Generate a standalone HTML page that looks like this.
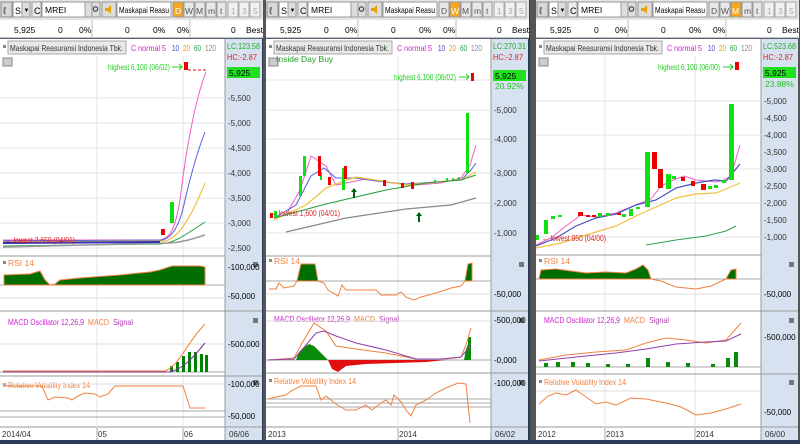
<!DOCTYPE html>
<html><head><meta charset="utf-8"><style>
html,body{margin:0;padding:0;background:#2a3a5a;}
svg{display:block;font-family:"Liberation Sans",sans-serif;}
</style></head><body>
<svg width="800" height="444" viewBox="0 0 800 444" xmlns="http://www.w3.org/2000/svg">
<defs>
<g id="toolbar">
  <rect x="0" y="0" width="263" height="20" fill="#e4e4e4"/>
  <rect x="1" y="2" width="11" height="15" fill="#d8d8d8" stroke="#888"/>
  <text x="3" y="14" font-size="10" fill="#335">&#8467;</text>
  <rect x="13" y="2" width="9" height="15" fill="#fff" stroke="#999"/><text x="15" y="14" font-size="9">S</text>
  <rect x="22" y="2" width="8" height="15" fill="#ddd" stroke="#999"/><text x="23.5" y="12" font-size="6">▼</text>
  <rect x="32" y="2" width="9" height="15" fill="#eee" stroke="#999"/><text x="34" y="14" font-size="9">C</text>
  <rect x="42" y="2" width="43" height="15" fill="#fff" stroke="#999"/><text x="45" y="13" font-size="8.5">MREI</text>
  <rect x="85" y="2" width="7" height="15" fill="#ddd" stroke="#999"/>
  <rect x="92" y="2" width="8" height="15" fill="#ddd" stroke="#999"/><circle cx="95.5" cy="9" r="2.2" fill="none" stroke="#246" stroke-width="1.1"/>
  <rect x="102" y="2" width="14" height="15" fill="#ddd" stroke="#999"/><path d="M105 8h3l3-3v9l-3-3h-3z" fill="#e8a000"/>
  <rect x="117" y="2" width="54" height="15" fill="#fff" stroke="#999"/><text x="119" y="13" font-size="8.5" textLength="50" lengthAdjust="spacingAndGlyphs">Maskapai Reasu</text>
  <rect x="173" y="2" width="10" height="15" fill="#e8e8e8" stroke="#999"/><text x="175" y="14" font-size="8.5" fill="#555">D</text>
  <rect x="184" y="2" width="10" height="15" fill="#e8e8e8" stroke="#999"/><text x="185" y="14" font-size="8.5" fill="#555">W</text>
  <rect x="195" y="2" width="10" height="15" fill="#e8e8e8" stroke="#999"/><text x="196" y="14" font-size="8.5" fill="#555">M</text>
  <rect x="206" y="2" width="10" height="15" fill="#e8e8e8" stroke="#999"/><text x="208" y="14" font-size="8.5" fill="#555">m</text>
  <rect x="217" y="2" width="9" height="15" fill="#e8e8e8" stroke="#999"/><text x="220" y="14" font-size="8.5" fill="#555">t</text>
  <rect x="228" y="2" width="10" height="15" fill="#f0f0f0" stroke="#aaa"/><text x="231" y="14" font-size="8.5" fill="#aaa">1</text>
  <rect x="239" y="2" width="10" height="15" fill="#f0f0f0" stroke="#aaa"/><text x="242" y="14" font-size="8.5" fill="#aaa">3</text>
  <rect x="250" y="2" width="10" height="15" fill="#f0f0f0" stroke="#aaa"/><text x="253" y="14" font-size="8.5" fill="#aaa">5</text>
  <rect x="0" y="20" width="263" height="18" fill="#fff"/>
  <line x1="0" y1="38" x2="263" y2="38" stroke="#888"/>
  <line x1="92" y1="20" x2="92" y2="38" stroke="#bbb"/><line x1="190" y1="20" x2="190" y2="38" stroke="#bbb"/>
  <g font-size="8.5"><text x="14" y="33">5,925</text><text x="58" y="33">0</text><text x="79" y="33">0%</text>
  <text x="125" y="33">0</text><text x="153" y="33">0%</text><text x="177" y="33">0%</text>
  <text x="231" y="33">0</text><text x="246" y="33">Best</text></g>
</g>
<g id="frame">
  <rect x="0" y="39" width="225" height="389" fill="#fff"/>
  <rect x="225" y="39" width="37" height="401" fill="#d6e2ef"/>
  <rect x="0" y="428" width="225" height="12" fill="#fff"/>
  <line x1="225" y1="39" x2="225" y2="440" stroke="#999"/>
  <line x1="0" y1="427" x2="262" y2="427" stroke="#999"/>
  <rect x="3" y="45" width="3" height="3" fill="#888"/>
  <rect x="8" y="41" width="118" height="13" fill="#e8e8e8" stroke="#aaa"/>
  <text x="10" y="51" font-size="8.5" fill="#333" textLength="113" lengthAdjust="spacingAndGlyphs">Maskapai Reasuransi Indonesia Tbk.</text>
  <text x="131" y="51" font-size="8.5" fill="#d020d0" textLength="35" lengthAdjust="spacingAndGlyphs">C normal 5</text>
  <text x="172" y="51" font-size="8.5" fill="#4040d0" textLength="7" lengthAdjust="spacingAndGlyphs">10</text>
  <text x="183" y="51" font-size="8.5" fill="#e0a000" textLength="7" lengthAdjust="spacingAndGlyphs">20</text>
  <text x="194" y="51" font-size="8.5" fill="#20a040" textLength="7" lengthAdjust="spacingAndGlyphs">60</text>
  <text x="205" y="51" font-size="8.5" fill="#888" textLength="11" lengthAdjust="spacingAndGlyphs">120</text>
  <rect x="3" y="58" width="9" height="8" fill="#ccc" stroke="#888"/>
  <rect x="227" y="67" width="33" height="11" fill="#20e020"/>
  <text x="229" y="76" font-size="8.5">5,925</text>
  <rect x="253" y="262" width="5" height="5" fill="#777"/>
  <rect x="253" y="318" width="5" height="5" fill="#777"/>
  <rect x="253" y="380" width="5" height="5" fill="#777"/>
</g>
</defs>

<rect x="0" y="0" width="800" height="444" fill="#2a3a5a"/>
<rect x="263" y="0" width="3" height="440" fill="#555"/>
<rect x="530" y="0" width="6" height="440" fill="#555"/>
<rect x="797" y="0" width="3" height="440" fill="#555"/>

<!-- PANEL 1 -->
<g transform="translate(0,0)">
<use href="#toolbar"/><use href="#frame"/>
<rect x="173" y="2" width="10" height="15" fill="#f5a623" stroke="#999"/><text x="175" y="14" font-size="8.5" fill="#fff">D</text>
<rect x="227" y="40" width="33" height="24" fill="#d6e2ef"/>
<text x="227" y="49" font-size="8.5" fill="#20b020" textLength="33" lengthAdjust="spacingAndGlyphs">LC:123.58</text>
<text x="227" y="60" font-size="8.5" fill="#e02020" textLength="30" lengthAdjust="spacingAndGlyphs">HC:-2.87</text>
<g stroke="#e4e4e4"><line x1="0" y1="98" x2="225" y2="98"/><line x1="0" y1="123" x2="225" y2="123"/><line x1="0" y1="148" x2="225" y2="148"/><line x1="0" y1="173" x2="225" y2="173"/><line x1="0" y1="198" x2="225" y2="198"/><line x1="0" y1="223" x2="225" y2="223"/><line x1="0" y1="248" x2="225" y2="248"/>
<line x1="97" y1="56" x2="97" y2="427"/><line x1="183" y1="56" x2="183" y2="427"/></g>
<g font-size="8" fill="#333"><text x="228" y="101">-5,500</text><text x="228" y="126">-5,000</text><text x="228" y="151">-4,500</text><text x="228" y="176">-4,000</text><text x="228" y="201">-3,500</text><text x="228" y="226">-3,000</text><text x="228" y="251">-2,500</text></g>
<text x="108" y="70" font-size="8.5" fill="#20d020" textLength="62" lengthAdjust="spacingAndGlyphs">highest 6,100 (06/02)</text>
<path d="M172 67h10M179 64l3 3-3 3" stroke="#20d020" fill="none"/>
<rect x="184" y="62" width="4" height="8" fill="#e00"/>
<path d="M188 70h18" stroke="#e00" stroke-dasharray="3,2"/>
<path d="M3 240L160 240C170 238 175 230 180 200C186 150 195 100 206 72" stroke="#f060c0" fill="none"/>
<path d="M3 241L162 240C172 238 180 225 185 200C192 170 198 150 205 132" stroke="#5060e0" fill="none"/>
<path d="M3 242L165 241C178 238 190 220 205 183" stroke="#f0c040" fill="none" stroke-width="1.2"/>
<path d="M3 246L160 244C175 243 185 235 205 222" stroke="#20a040" fill="none"/>
<path d="M3 247L170 243C185 242 195 238 205 235" stroke="#999" fill="none" stroke-width="1.5"/>
<path d="M3 243L160 242" stroke="#3030c0" stroke-width="2"/>
<rect x="161" y="229" width="4" height="6" fill="#e00"/>
<rect x="170" y="202" width="4" height="21" fill="#10e010"/>
<text x="5" y="243" font-size="8.5" fill="#e02020" textLength="70" lengthAdjust="spacingAndGlyphs">← lowest 2,650 (04/01)</text>
<line x1="0" y1="256" x2="225" y2="256" stroke="#999"/>
<text x="8" y="266" font-size="8.5" fill="#f08040">RSI 14</text><rect x="3" y="261" width="3" height="3" fill="#888"/>
<line x1="0" y1="285" x2="225" y2="285" stroke="#aaa"/><line x1="0" y1="298" x2="225" y2="298" stroke="#ddd"/>
<path d="M4 285V275L30 274L40 271L45 280L50 285L55 284L60 280L80 278L120 275L150 272L160 270L172 266L200 266L205 267V285Z" fill="#006e00" stroke="#f08040"/>
<g font-size="8"><text x="228" y="270">-100,000</text><text x="228" y="299">-50,000</text></g>
<line x1="0" y1="311" x2="262" y2="311" stroke="#999"/>
<text x="8" y="325" font-size="8.5" fill="#d020d0" textLength="76" lengthAdjust="spacingAndGlyphs">MACD Oscillator 12,26,9</text><text x="88" y="325" font-size="8.5" fill="#f08040" textLength="21" lengthAdjust="spacingAndGlyphs">MACD</text><text x="113" y="325" font-size="8.5" fill="#b040b0" textLength="20" lengthAdjust="spacingAndGlyphs">Signal</text>
<line x1="0" y1="344" x2="225" y2="344" stroke="#ddd"/>
<line x1="0" y1="372" x2="225" y2="372" stroke="#aaa"/>
<g fill="#008000"><rect x="170" y="366" width="3" height="6"/><rect x="176" y="362" width="3" height="10"/><rect x="182" y="356" width="3" height="16"/><rect x="188" y="352" width="3" height="20"/><rect x="194" y="352" width="3" height="20"/><rect x="200" y="354" width="3" height="18"/><rect x="205" y="355" width="3" height="17"/></g>
<path d="M3 371L165 371C180 365 185 345 205 324" stroke="#f08040" fill="none"/>
<path d="M3 372L170 372C185 368 195 355 205 343" stroke="#8030a0" fill="none"/>
<text x="228" y="347" font-size="8">-500,000</text>
<line x1="0" y1="376" x2="262" y2="376" stroke="#999"/>
<text x="8" y="388" font-size="8.5" fill="#f08040" textLength="82" lengthAdjust="spacingAndGlyphs">Relative Volatility Index 14</text><rect x="3" y="383" width="3" height="3" fill="#888"/>
<line x1="0" y1="384" x2="225" y2="384" stroke="#ddd"/><line x1="0" y1="411" x2="225" y2="411" stroke="#aaa"/><line x1="0" y1="417" x2="225" y2="417" stroke="#aaa"/>
<path d="M3 386L42 386L48 400L55 397L68 398L72 400L78 396L85 393L95 394L100 397L108 394L115 386L183 386L190 408L205 408" stroke="#f08040" fill="none"/>
<g font-size="8"><text x="228" y="387">-100,000</text><text x="228" y="419">-50,000</text></g>
<g font-size="8" fill="#333"><text x="2" y="437">2014/04</text><text x="98" y="437">05</text><text x="184" y="437">06</text><text x="229" y="437">06/06</text></g>
<line x1="97" y1="428" x2="97" y2="440" stroke="#aaa"/><line x1="183" y1="428" x2="183" y2="440" stroke="#aaa"/>
</g>

<!-- PANEL 2 -->
<g transform="translate(266,0)">
<use href="#toolbar"/><use href="#frame"/>
<rect x="184" y="2" width="10" height="15" fill="#f5a623" stroke="#999"/><text x="185" y="14" font-size="8.5" fill="#fff">W</text>
<rect x="227" y="40" width="33" height="24" fill="#d6e2ef"/>
<text x="227" y="49" font-size="8.5" fill="#20b020" textLength="33" lengthAdjust="spacingAndGlyphs">LC:270.31</text>
<text x="227" y="60" font-size="8.5" fill="#e02020" textLength="30" lengthAdjust="spacingAndGlyphs">HC:-2.87</text>
<rect x="227" y="70" width="33" height="11" fill="#20e020"/><rect x="227" y="67" width="33" height="3" fill="#d6e2ef"/>
<text x="229" y="79" font-size="8.5">5,925</text>
<text x="229" y="89" font-size="8.5" fill="#20c020">20.92%</text>
<text x="10" y="62" font-size="8.5" fill="#20a020">Inside Day Buy</text>
<g stroke="#e4e4e4"><line x1="0" y1="80" x2="225" y2="80"/><line x1="0" y1="110" x2="225" y2="110"/><line x1="0" y1="139" x2="225" y2="139"/><line x1="0" y1="173" x2="225" y2="173"/><line x1="0" y1="203" x2="225" y2="203"/><line x1="0" y1="233" x2="225" y2="233"/>
<line x1="132" y1="56" x2="132" y2="427"/></g>
<g font-size="8" fill="#333"><text x="228" y="113">-5,000</text><text x="228" y="142">-4,000</text><text x="228" y="176">-3,000</text><text x="228" y="206">-2,000</text><text x="228" y="236">-1,000</text></g>
<text x="128" y="80" font-size="8.5" fill="#20d020" textLength="62" lengthAdjust="spacingAndGlyphs">highest 6,100 (06/02)</text>
<path d="M193 77h10M200 74l3 3-3 3" stroke="#20d020" fill="none"/>
<rect x="205" y="73" width="3" height="8" fill="#e00"/>
<path d="M8 218L20 215L34 190L45 156L60 166L70 185L80 183L100 179L125 183L150 185L175 183L195 178L204 165L210 145" stroke="#f060c0" fill="none"/>
<path d="M8 218L30 205L45 176L58 168L70 178L90 178L110 181L140 184L170 182L195 180L205 170L210 163" stroke="#5060e0" fill="none"/>
<path d="M8 220L40 205L60 188L75 182L90 177L110 180L140 185L170 182L195 180L210 172" stroke="#f0c040" fill="none" stroke-width="1.2"/>
<path d="M8 218L60 204L120 190L160 183L195 180L210 175" stroke="#20a040" fill="none"/>
<path d="M20 232L80 218L140 209L185 205L210 198" stroke="#888" fill="none" stroke-width="1.2"/>
<g fill="#10e010"><rect x="33" y="176" width="3" height="20"/><rect x="37" y="156" width="3" height="20"/><rect x="54" y="172" width="2" height="8"/><rect x="76" y="168" width="3" height="22"/><rect x="200" y="113" width="3" height="60"/><rect x="8" y="211" width="3" height="6"/></g>
<g fill="#e00"><rect x="52" y="156" width="3" height="20"/><rect x="62" y="177" width="3" height="8"/><rect x="78" y="166" width="3" height="13"/><rect x="117" y="180" width="3" height="6"/><rect x="145" y="182" width="3" height="7"/><rect x="135" y="183" width="3" height="5"/><rect x="4" y="213" width="3" height="5"/></g>
<g fill="#10c010" opacity=".8"><rect x="180" y="178" width="2" height="3"/><rect x="186" y="178" width="2" height="3"/><rect x="192" y="177" width="2" height="3"/><rect x="168" y="180" width="2" height="3"/></g>
<path d="M87 198v-6h-2l3-4 3 4h-2v6z" fill="#006000"/><path d="M152 222v-6h-2l3-4 3 4h-2v6z" fill="#006000"/>
<text x="4" y="216" font-size="8.5" fill="#e02020" textLength="70" lengthAdjust="spacingAndGlyphs">← lowest 1,600 (04/01)</text>
<line x1="0" y1="256" x2="225" y2="256" stroke="#999"/>
<text x="8" y="264" font-size="8.5" fill="#f08040">RSI 14</text><rect x="3" y="259" width="3" height="3" fill="#888"/>
<line x1="0" y1="281" x2="225" y2="281" stroke="#aaa"/><line x1="0" y1="294" x2="225" y2="294" stroke="#ddd"/>
<path d="M31 281L35 264L49 264L52 281Z" fill="#006e00" stroke="#f08040"/>
<path d="M199 281L202 264L206 263L206 281Z" fill="#006e00" stroke="#f08040"/>
<path d="M3 289L10 289L13 283L18 288L28 286L31 281M52 281L58 283L62 290L72 296L76 285L80 290L110 290L115 295L130 295L135 292L140 297L148 300L155 297L170 293L185 288L195 286L199 281" stroke="#f08040" fill="none"/>
<text x="228" y="297" font-size="8">-50,000</text>
<line x1="0" y1="311" x2="262" y2="311" stroke="#999"/>
<text x="8" y="322" font-size="8.5" fill="#d020d0" textLength="76" lengthAdjust="spacingAndGlyphs">MACD Oscillator 12,26,9</text><text x="88" y="322" font-size="8.5" fill="#f08040" textLength="21" lengthAdjust="spacingAndGlyphs">MACD</text><text x="113" y="322" font-size="8.5" fill="#b040b0" textLength="20" lengthAdjust="spacingAndGlyphs">Signal</text>
<line x1="0" y1="360" x2="225" y2="360" stroke="#aaa"/><line x1="0" y1="321" x2="225" y2="321" stroke="#ddd"/>
<path d="M30 360L33 352L38 347L43 344L48 346L52 350L58 356L62 360Z" fill="#0a8a0a"/>
<path d="M62 360L66 369L72 372L80 366L100 364L130 363L160 362L180 360Z" fill="#e01010"/>
<path d="M198 360L200 349L203 342L205 360Z" fill="#0a8a0a"/><rect x="202" y="337" width="3" height="23" fill="#0a8a0a"/>
<path d="M2 360L28 358L35 345L48 323L60 331L70 346L90 349L120 353L150 359L180 359L195 357L200 345L205 328" stroke="#f08040" fill="none"/>
<path d="M2 360L28 359L40 345L50 333L58 331L70 336L90 343L120 350L150 359L175 359L195 357L205 345" stroke="#9040b0" fill="none"/>
<g font-size="8"><text x="228" y="323">-500,000</text><text x="228" y="363">-0,000</text></g>
<line x1="0" y1="373" x2="262" y2="373" stroke="#999"/>
<text x="8" y="384" font-size="8.5" fill="#f08040" textLength="82" lengthAdjust="spacingAndGlyphs">Relative Volatility Index 14</text><rect x="3" y="379" width="3" height="3" fill="#888"/>
<line x1="0" y1="399" x2="225" y2="399" stroke="#aaa"/><line x1="0" y1="403" x2="225" y2="403" stroke="#aaa"/><line x1="0" y1="407" x2="225" y2="407" stroke="#aaa"/>
<path d="M2 399L10 397L20 395L25 391L35 386L50 386L55 400L60 396L70 404L80 410L90 410L100 405L106 410L115 403L120 400L125 405L128 395L135 402L140 410L145 416L150 405L160 400L170 393L180 388L192 383L200 384L204 423" stroke="#f08040" fill="none"/>
<text x="228" y="386" font-size="8">-100,000</text>
<g font-size="8" fill="#333"><text x="2" y="437">2013</text><text x="133" y="437">2014</text><text x="229" y="437">06/02</text></g>
<line x1="132" y1="428" x2="132" y2="440" stroke="#aaa"/>
</g>

<!-- PANEL 3 -->
<g transform="translate(536,0)">
<use href="#toolbar"/><use href="#frame"/>
<rect x="195" y="2" width="10" height="15" fill="#f5a623" stroke="#999"/><text x="196" y="14" font-size="8.5" fill="#fff">M</text>
<rect x="227" y="40" width="33" height="24" fill="#d6e2ef"/>
<text x="227" y="49" font-size="8.5" fill="#20b020" textLength="33" lengthAdjust="spacingAndGlyphs">LC:523.68</text>
<text x="227" y="60" font-size="8.5" fill="#e02020" textLength="30" lengthAdjust="spacingAndGlyphs">HC:-2.87</text>
<text x="229" y="87" font-size="8.5" fill="#20c020">23.88%</text>
<g stroke="#e4e4e4"><line x1="0" y1="101" x2="225" y2="101"/><line x1="0" y1="135" x2="225" y2="135"/><line x1="0" y1="169" x2="225" y2="169"/><line x1="0" y1="203" x2="225" y2="203"/><line x1="0" y1="237" x2="225" y2="237"/>
<line x1="69" y1="56" x2="69" y2="427"/><line x1="159" y1="56" x2="159" y2="427"/></g>
<g font-size="8" fill="#333"><text x="228" y="104">-5,000</text><text x="228" y="121">-4,500</text><text x="228" y="138">-4,000</text><text x="228" y="155">-3,500</text><text x="228" y="172">-3,000</text><text x="228" y="189">-2,500</text><text x="228" y="206">-2,000</text><text x="228" y="223">-1,500</text><text x="228" y="240">-1,000</text></g>
<text x="122" y="70" font-size="8.5" fill="#20d020" textLength="62" lengthAdjust="spacingAndGlyphs">highest 6,100 (06/00)</text>
<path d="M187 67h10M194 64l3 3-3 3" stroke="#20d020" fill="none"/>
<rect x="199" y="62" width="4" height="8" fill="#e00"/>
<path d="M0 245L15 238L30 226L45 215L60 217L80 213L100 205L115 199L125 186L135 181L148 176L160 180L180 182L188 180L195 176L204 145" stroke="#f060c0" fill="none"/>
<path d="M0 246L20 238L40 226L60 218L80 214L100 205L120 200L140 188L160 183L178 180L190 181L204 164" stroke="#4050c0" fill="none" stroke-width="1.2"/>
<path d="M0 248L25 243L50 235L80 226L100 216L120 207L140 198L160 194L180 193L190 189L204 183" stroke="#f0c040" fill="none" stroke-width="1.2"/>
<path d="M110 245L140 240L170 236L190 231L200 226" stroke="#30a050" fill="none"/>
<g fill="#10e010"><rect x="0" y="235" width="3" height="5"/><rect x="8" y="220" width="4" height="14"/><rect x="15" y="216" width="4" height="3"/><rect x="22" y="215" width="4" height="2"/><rect x="62" y="213" width="4" height="4"/><rect x="70" y="213" width="4" height="3"/><rect x="86" y="214" width="4" height="3"/><rect x="93" y="209" width="4" height="7"/><rect x="100" y="207" width="4" height="2"/><rect x="109" y="152" width="5" height="55"/><rect x="130" y="174" width="5" height="15"/><rect x="136" y="176" width="4" height="3"/><rect x="172" y="186" width="4" height="3"/><rect x="178" y="185" width="4" height="3"/><rect x="186" y="180" width="4" height="3"/><rect x="193" y="104" width="5" height="76"/></g>
<g fill="#e00"><rect x="42" y="212" width="5" height="4"/><rect x="50" y="215" width="4" height="2"/><rect x="56" y="215" width="4" height="2"/><rect x="81" y="213" width="4" height="2"/><rect x="116" y="152" width="5" height="17"/><rect x="122" y="169" width="5" height="19"/><rect x="145" y="177" width="4" height="4"/><rect x="155" y="181" width="4" height="5"/><rect x="165" y="184" width="5" height="6"/></g>
<text x="6" y="241" font-size="8.5" fill="#e02020" textLength="64" lengthAdjust="spacingAndGlyphs">← lowest 950 (04/00)</text>
<line x1="0" y1="255" x2="225" y2="255" stroke="#999"/>
<text x="8" y="264" font-size="8.5" fill="#f08040">RSI 14</text><rect x="3" y="259" width="3" height="3" fill="#888"/>
<line x1="0" y1="279" x2="225" y2="279" stroke="#aaa"/><line x1="0" y1="294" x2="225" y2="294" stroke="#ddd"/>
<path d="M3 279L5 270L20 269L35 271L50 273L70 272L90 273L100 269L107 265L112 270L115 279Z" fill="#006e00" stroke="#f08040"/>
<path d="M190 279L195 270L200 269L200 279Z" fill="#006e00" stroke="#f08040"/>
<path d="M115 279L125 281L140 287L160 289L175 286L190 279" stroke="#f08040" fill="none"/>
<text x="228" y="297" font-size="8">-50,000</text>
<line x1="0" y1="311" x2="262" y2="311" stroke="#999"/>
<text x="8" y="323" font-size="8.5" fill="#d020d0" textLength="76" lengthAdjust="spacingAndGlyphs">MACD Oscillator 12,26,9</text><text x="88" y="323" font-size="8.5" fill="#f08040" textLength="21" lengthAdjust="spacingAndGlyphs">MACD</text><text x="113" y="323" font-size="8.5" fill="#b040b0" textLength="20" lengthAdjust="spacingAndGlyphs">Signal</text>
<line x1="0" y1="367" x2="225" y2="367" stroke="#aaa"/>
<g fill="#0a8a0a"><rect x="8" y="363" width="4" height="4"/><rect x="20" y="362" width="4" height="5"/><rect x="35" y="362" width="4" height="5"/><rect x="50" y="363" width="4" height="4"/><rect x="70" y="364" width="4" height="3"/><rect x="90" y="364" width="4" height="3"/><rect x="110" y="358" width="4" height="9"/><rect x="130" y="362" width="4" height="5"/><rect x="150" y="363" width="4" height="4"/><rect x="175" y="364" width="4" height="3"/><rect x="190" y="358" width="4" height="9"/><rect x="198" y="352" width="4" height="15"/></g>
<path d="M3 360L30 355L60 352L90 350L110 343L130 338L150 340L170 343L190 340L205 323" stroke="#f08040" fill="none"/>
<path d="M3 361L40 357L80 353L110 349L140 344L170 342L190 341L205 334" stroke="#9040b0" fill="none"/>
<text x="228" y="340" font-size="8">-500,000</text>
<line x1="0" y1="374" x2="262" y2="374" stroke="#999"/>
<text x="8" y="385" font-size="8.5" fill="#f08040" textLength="82" lengthAdjust="spacingAndGlyphs">Relative Volatility Index 14</text><rect x="3" y="380" width="3" height="3" fill="#888"/>
<line x1="0" y1="391" x2="225" y2="391" stroke="#ddd"/>
<path d="M3 404L12 396L20 393L30 395L40 390L50 397L60 404L70 402L80 405L95 398L110 399L130 403L145 407L160 415L175 413L190 409L205 404" stroke="#f08040" fill="none"/>
<text x="228" y="415" font-size="8">-50,000</text>
<g font-size="8" fill="#333"><text x="2" y="437">2012</text><text x="70" y="437">2013</text><text x="160" y="437">2014</text><text x="229" y="437">06/00</text></g>
<line x1="69" y1="428" x2="69" y2="440" stroke="#aaa"/><line x1="159" y1="428" x2="159" y2="440" stroke="#aaa"/>
</g>
</svg>
</body></html>
